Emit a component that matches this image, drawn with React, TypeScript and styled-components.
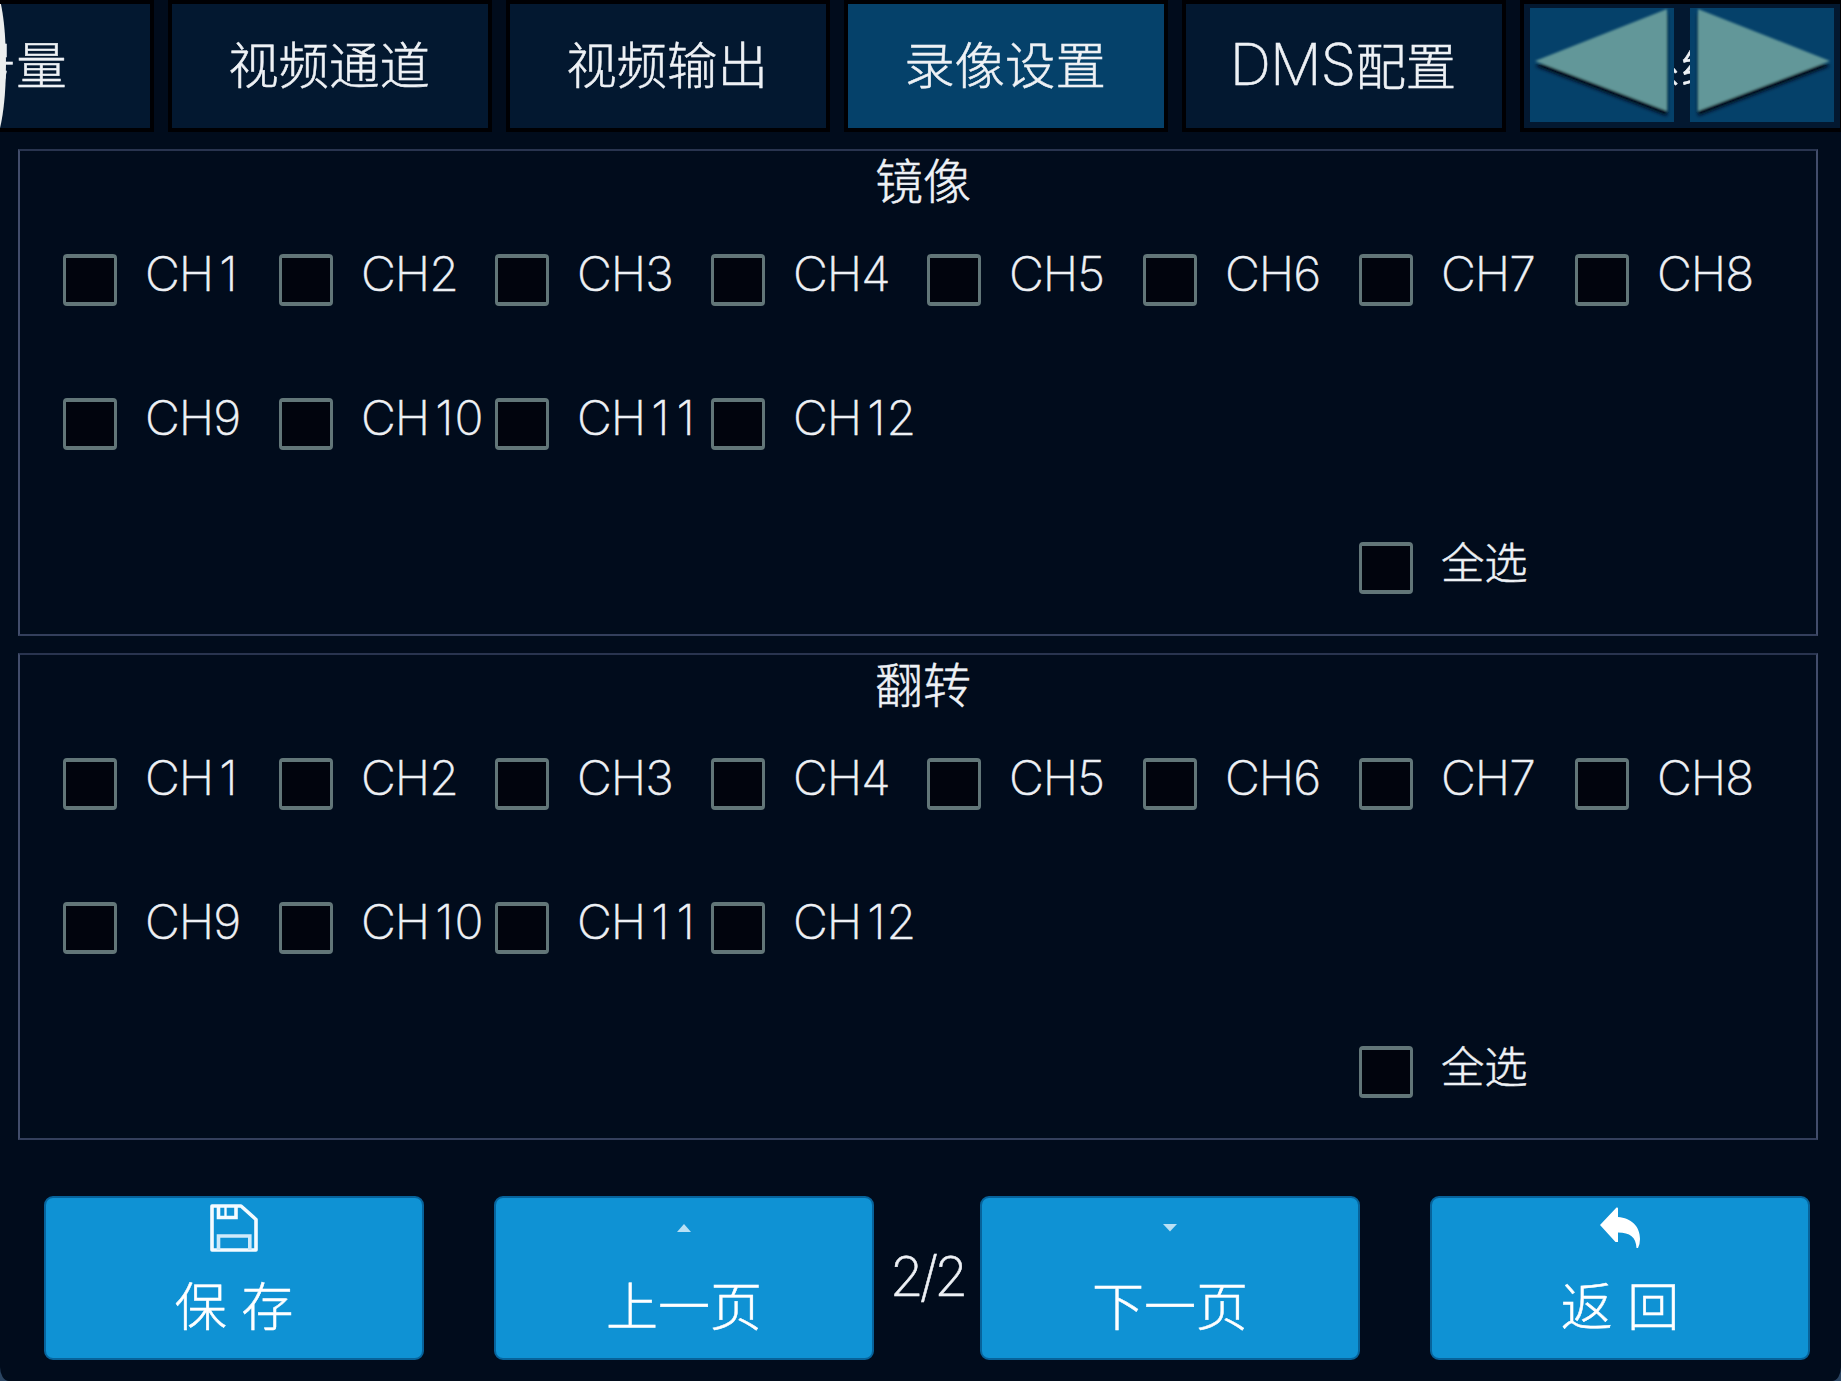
import React from 'react';
import styled, { createGlobalStyle } from 'styled-components';

const fontStack = 'Inter, "Noto Sans CJK SC", sans-serif';

const GlobalStyle = createGlobalStyle`
  *, *::before, *::after { box-sizing: border-box; }
  body { margin: 0; background: #2b4562; overflow: hidden; }
`;

const Screen = styled.div`
  position: relative;
  display: flex;
  flex-direction: column;
  width: 1841px;
  height: 1381px;
  overflow: hidden;
  background: #010c1c;
  border-radius: 0 0 9px 9px / 0 0 14px 14px;
  color: #eef1f5;
  font-family: ${fontStack};
  font-weight: 300;
  -webkit-text-stroke: 0.5px currentColor;
`;

const TabBar = styled.nav`
  position: relative;
  height: 132px;
  flex: none;
  overflow: hidden;
`;

const TabTrack = styled.div`
  display: flex;
  gap: 14px;
  margin-left: -170px;
`;

const Tab = styled.button<{ $active?: boolean }>`
  flex: none;
  width: 324px;
  height: 132px;
  padding: 0 2px 1px 0;
  border: 4px solid #000003;
  background: ${p => (p.$active ? '#05416a' : '#031830')};
  color: inherit;
  font-family: inherit;
  font-weight: inherit;
  font-size: 50.4px;
  line-height: 60px;
  white-space: nowrap;
  -webkit-text-stroke: inherit;
`;

const Latin = styled.span`
  font-size: 57.5px;
  font-weight: 200;
  letter-spacing: -1px;
`;

const EdgeKnob = styled.div`
  position: absolute;
  left: -24px;
  top: 4px;
  width: 30px;
  height: 124px;
  overflow: hidden;
  &::before {
    content: '';
    position: absolute;
    right: 0;
    top: -20px;
    width: 30px;
    height: 160px;
    border-radius: 50%;
    background: #eceeee;
  }
`;

const ScrollButtons = styled.div`
  position: absolute;
  left: 1530px;
  top: 8px;
  display: flex;
  gap: 16px;
`;

const ScrollButton = styled.button`
  width: 144px;
  height: 114px;
  padding: 0;
  border: 0;
  background: #05416a;
  svg { display: block; }
`;

const Panels = styled.main`
  display: flex;
  flex-direction: column;
  gap: 17px;
  padding: 17px 23px 0 18px;
`;

const Panel = styled.section`
  height: 487px;
  border: 2px solid #424d6b;
  border-top-color: #29344f;
  border-bottom-color: #343f5c;
`;

const PanelTitle = styled.h2`
  margin: 0;
  padding: 1px 0 0 10px;
  height: 103px;
  font-size: 48px;
  line-height: 60px;
  font-weight: 300;
  text-align: center;
`;

const ChannelGrid = styled.div`
  display: grid;
  grid-template-columns: repeat(8, 216px);
  grid-auto-rows: 144px;
  padding-left: 42.5px;
`;

const Check = styled.label<{ $all?: boolean }>`
  display: flex;
  align-items: flex-start;
  gap: 28px;
  height: 52px;
  ${p => p.$all && 'grid-column: 7; grid-row: 3;'}
`;

const Box = styled.span`
  flex: none;
  width: 54.5px;
  height: 52px;
  border: 4px solid #627678;
  border-left-width: 3px;
  border-right-width: 3px;
  border-radius: 4px;
  background: #01040d;
`;

const CheckText = styled.span<{ $cjk?: boolean }>`
  font-size: ${p => (p.$cjk ? 43.3 : 48)}px;
  font-weight: ${p => (p.$cjk ? 300 : 200)};
  line-height: ${p => (p.$cjk ? 42 : 39)}px;
  letter-spacing: ${p => (p.$cjk ? 0 : -1)}px;
  white-space: nowrap;
`;

const One = styled.span`
  margin: 0 2px 0 6px;
`;

const Footer = styled.footer`
  display: flex;
  align-items: center;
  height: 164px;
  margin-top: 56px;
  padding: 0 31px 0 44px;
`;

const Action = styled.button`
  display: flex;
  flex-direction: column;
  align-items: center;
  width: 380px;
  height: 164px;
  padding: 6px 0 0;
  border: 2px solid #07639b;
  border-radius: 9px;
  background: #0f92d4;
  color: #fff;
  font-family: inherit;
  font-weight: 300;
  font-size: 52px;
  line-height: 60px;
  white-space: pre;
  -webkit-text-stroke: inherit;
`;

const IconSlot = styled.span`
  display: flex;
  align-items: center;
  justify-content: center;
  height: 48px;
  margin-bottom: 26px;
`;

const Spacer = styled.span`
  width: 70px;
`;

const PageCount = styled.span`
  width: 106px;
  padding-bottom: 4px;
  text-align: center;
  font-size: 55px;
  font-weight: 200;
  line-height: 60px;
  letter-spacing: -4px;
`;

const ScrollArrow = ({ mirrored, id }: { mirrored?: boolean; id: string }) => (
  <svg width="144" height="114" viewBox="0 0 144 114">
    <defs>
      <filter id={id} x="-10%" y="-10%" width="120%" height="130%">
        <feGaussianBlur in="SourceGraphic" stdDeviation="0.9" result="soft" />
        <feDropShadow in="soft" dx="0" dy="5" stdDeviation="1.8" floodColor="#000e1a" floodOpacity="1" />
      </filter>
    </defs>
    <g transform={mirrored ? 'translate(145 0) scale(-1 1)' : undefined} filter={`url(#${id})`}>
      <path d="M5 53 L137 1 V103 Z" fill="#629799" />
    </g>
  </svg>
);

const SaveIcon = () => (
  <svg width="48" height="48" viewBox="0 0 48 48" fill="none" stroke="#f4fbff" strokeWidth="3.6">
    <path d="M2 2 H31 L46 15.5 V46 H2 Z" strokeLinejoin="round" />
    <path d="M8.5 2 V13.5 H26 V2" />
    <path d="M15.5 3 V12" strokeWidth="2.4" />
    <path d="M8.5 46 V32 H39.8 V46" stroke="#cfeafa" />
  </svg>
);

const UpIcon = () => (
  <svg width="14" height="8" viewBox="0 0 14 8"><path d="M7 0 L14 8 H0 Z" fill="#b9e0f5" /></svg>
);

const DownIcon = () => (
  <svg width="14" height="8" viewBox="0 0 14 8"><path d="M0 0 H14 L7 7.5 Z" fill="#b9e0f5" /></svg>
);

const BackIcon = () => (
  <svg width="40" height="42" viewBox="0 0 40 42">
    <path d="M0 18 L16.5 0.5 Q18 0 18 1.5 V10 C31 11 40 19 40 32 Q40 37 38 41 H36.5 C36 30 30 25.5 18 25.5 V35 H15.5 Z" fill="#fff" />
  </svg>
);

const channels = Array.from({ length: 12 }, (_, i) => `CH${i + 1}`);

const ChannelName = ({ name }: { name: string }) => (
  <CheckText>
    {name.split(/(1)/).map((part, i) => (part === '1' ? <One key={i}>1</One> : part))}
  </CheckText>
);

const ChannelPanel = ({ title }: { title: string }) => (
  <Panel>
    <PanelTitle>{title}</PanelTitle>
    <ChannelGrid>
      {channels.map(name => (
        <Check key={name}><Box /><ChannelName name={name} /></Check>
      ))}
      <Check $all><Box /><CheckText $cjk>全选</CheckText></Check>
    </ChannelGrid>
  </Panel>
);

export default function App() {
  return (
    <>
      <GlobalStyle />
      <Screen>
        <TabBar>
          <TabTrack>
            <Tab>信号量</Tab>
            <Tab>视频通道</Tab>
            <Tab>视频输出</Tab>
            <Tab $active>录像设置</Tab>
            <Tab><Latin>DMS</Latin>配置</Tab>
            <Tab>系统</Tab>
          </TabTrack>
          <EdgeKnob />
          <ScrollButtons>
            <ScrollButton><ScrollArrow id="prev-shadow" /></ScrollButton>
            <ScrollButton><ScrollArrow id="next-shadow" mirrored /></ScrollButton>
          </ScrollButtons>
        </TabBar>
        <Panels>
          <ChannelPanel title="镜像" />
          <ChannelPanel title="翻转" />
        </Panels>
        <Footer>
          <Action><IconSlot><SaveIcon /></IconSlot>保 存</Action>
          <Spacer />
          <Action><IconSlot><UpIcon /></IconSlot>上一页</Action>
          <PageCount>2/2</PageCount>
          <Action><IconSlot><DownIcon /></IconSlot>下一页</Action>
          <Spacer />
          <Action><IconSlot><BackIcon /></IconSlot>返 回</Action>
        </Footer>
      </Screen>
    </>
  );
}
